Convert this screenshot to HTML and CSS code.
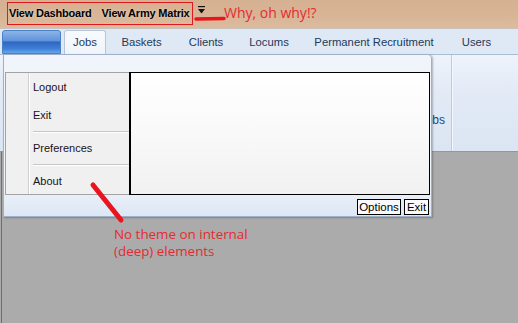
FILE: index.html
```html
<!DOCTYPE html>
<html>
<head>
  <title>Ribbon application menu</title>
  <link rel="stylesheet" href="styles.css">
</head>
<body>

  <div class="titlebar">
    <div class="quick-links">
      <span class="quick-link">View Dashboard</span>
      <span class="quick-link">View Army Matrix</span>
    </div>
    <svg class="qat-arrow" width="8" height="8" viewBox="0 0 8 8">
      <rect x="0" y="0" width="7" height="1.2" fill="#111"/>
      <polygon points="0,3 7,3 3.5,7.5" fill="#111"/>
    </svg>
    <span class="note note-why">Why, oh why!?</span>
  </div>

  <div class="tab-row">
    <div class="app-button"></div>
    <div class="tab active">Jobs</div>
    <div class="tab tab-baskets">Baskets</div>
    <div class="tab tab-clients">Clients</div>
    <div class="tab tab-locums">Locums</div>
    <div class="tab tab-perm">Permanent Recruitment</div>
    <div class="tab tab-users">Users</div>
  </div>

  <div class="ribbon">
    <div class="ribbon-group">
      <span class="group-label">Jobs</span>
    </div>
    <div class="ribbon-group empty"></div>
  </div>

  <div class="workspace"></div>

  <!-- application menu dropped over the ribbon -->
  <div class="app-menu">
    <div class="menu-top"></div>
    <div class="menu-body">
      <div class="menu-list">
        <div class="menu-gutter"></div>
        <div class="menu-items">
          <div class="menu-item">Logout</div>
          <div class="menu-item">Exit</div>
          <div class="menu-sep"></div>
          <div class="menu-item">Preferences</div>
          <div class="menu-sep small"></div>
          <div class="menu-item">About</div>
        </div>
      </div>
      <div class="recent-panel"></div>
    </div>
    <div class="menu-footer">
      <button class="plain-button options">Options</button>
      <button class="plain-button exit">Exit</button>
    </div>
  </div>

  <!-- annotations -->
  <svg class="marks" width="518" height="323" viewBox="0 0 518 323">
    <line x1="196" y1="19" x2="224" y2="18.5" stroke="#e8141e" stroke-width="3.5" stroke-linecap="round"/>
    <line x1="93" y1="185" x2="121" y2="220" stroke="#e8141e" stroke-width="5" stroke-linecap="round"/>
  </svg>
  <div class="note note-theme">No theme on internal<br>(deep) elements</div>

</body>
</html>
```

FILE: styles.css
```css
body {
  margin: 0;
  width: 518px;
  height: 323px;
  overflow: hidden;
  position: relative;
  background-color: #ababab;
  font-family: "Liberation Sans", Arial, sans-serif;
}

/* Title bar with quick access links */
.titlebar {
  height: 29px;
  display: flex;
  align-items: center;
  background: linear-gradient(180deg, #d5b091 0%, #d9b597 60%, #dcbb9e 100%);
  border-bottom: 1px solid #c9c2bb;
  box-sizing: border-box;
}

.quick-links {
  margin-left: 7px;
  width: 186px;
  height: 23px;
  box-sizing: border-box;
  border: 1px solid #e0191f;
  display: flex;
  align-items: flex-start;
  padding: 4px 0 0 1px;
  gap: 10px;
  margin-top: -1px;
}

.quick-link {
  font-size: 11px;
  font-weight: bold;
  color: #000;
  letter-spacing: -0.2px;
  text-shadow: 0 0 3px rgba(255, 255, 255, 0.5);
}

.qat-arrow {
  margin-left: 5px;
  margin-top: -9px;
}

.note {
  font-family: "Open Sans", "Noto Sans", sans-serif;
  color: #e52a30;
  font-size: 13.4px;
}

.note-why {
  margin-left: 18px;
  margin-top: -3px;
  font-size: 14px;
}

/* Ribbon tabs */
.tab-row {
  height: 25px;
  display: flex;
  align-items: flex-end;
  background-color: #dfe9f5;
  box-sizing: border-box;
}

.app-button {
  margin-left: 2px;
  width: 59px;
  height: 24px;
  box-sizing: border-box;
  border: 1px solid #4b7fc6;
  border-radius: 3px 3px 0 0;
  background: linear-gradient(180deg, #8db4e8 0%, #5e93dc 45%, #2f66c0 50%, #3f7fd6 80%, #63a6ee 100%);
}

.tab {
  height: 24px;
  box-sizing: border-box;
  display: flex;
  justify-content: center;
  align-items: center;
  font-size: 11.3px;
  color: #1e395b;
  padding-bottom: 1px;
}

.tab.active {
  margin-left: 3px;
  width: 42px;
  border: 1px solid #b7c6da;
  border-bottom: none;
  border-radius: 3px 3px 0 0;
  background: linear-gradient(180deg, #f8fafd, #f0f5fb);
}

.tab-baskets { width: 71px; }
.tab-clients { width: 58px; }
.tab-locums  { width: 68px; }
.tab-perm    { width: 142px; }
.tab-users   { width: 63px; }

/* Ribbon body */
.ribbon {
  height: 98px;
  display: flex;
  box-sizing: border-box;
  border-top: 1px solid #aabcd6;
  border-bottom: 1px solid #8e98a6;
  background: linear-gradient(180deg, #eef3fb 0%, #e2eaf6 40%, #dbe5f3 100%);
}

.ribbon-group {
  width: 452px;
  display: flex;
  justify-content: flex-end;
  align-items: flex-end;
  padding: 0 6px 24px 0;
  box-sizing: border-box;
  border-right: 1px solid #bccbdf;
}

.ribbon-group.empty {
  flex: 1;
  border-right: none;
  border-left: 1px solid #f4f7fc;
}

.group-label {
  font-size: 12px;
  color: #25467a;
}

/* Gray MDI area */
.workspace {
  height: 171px;
  margin-left: 1px;
  border-left: 1px solid #6f6f6f;
}

/* Application menu popup */
.app-menu {
  position: absolute;
  left: 3px;
  top: 54px;
  width: 429px;
  height: 163px;
  box-sizing: border-box;
  border: 1px solid #9fb0c8;
  border-top-right-radius: 4px;
  background: linear-gradient(180deg, #f1f5fb 0%, #eef3fa 80%, #dde7f5 100%);
  box-shadow: 1px 1px 2px rgba(0, 0, 0, 0.25);
  display: flex;
  flex-direction: column;
}

.menu-top {
  height: 17px;
}

.menu-body {
  display: flex;
  padding-left: 1px;
}

.menu-list {
  width: 124px;
  height: 123px;
  box-sizing: border-box;
  display: flex;
  background-color: #f0f0f0;
  border: 1px solid #a3a3a3;
  border-right: none;
}

.menu-gutter {
  width: 22px;
  border-right: 1px solid #cfcfcf;
  box-shadow: 1px 0 0 #ffffff;
}

.menu-items {
  flex: 1;
  padding-left: 4px;
}

.menu-item {
  height: 28px;
  display: flex;
  align-items: center;
  font-size: 11px;
  color: #1c1020;
}

.menu-sep {
  height: 5px;
  display: flex;
  align-items: center;
}

.menu-sep::after {
  content: "";
  flex: 1;
  height: 1px;
  background-color: #c6c6c6;
  box-shadow: 0 1px 0 #ffffff;
}

.menu-sep.small {
  height: 5px;
}

.recent-panel {
  width: 301px;
  height: 123px;
  box-sizing: border-box;
  border: 1px solid #000;
  border-left-width: 2px;
  background: linear-gradient(180deg, #ffffff 0%, #f9f9f9 50%, #f1f1f1 100%);
}

.menu-footer {
  flex: 1;
  display: flex;
  justify-content: flex-end;
  align-items: flex-start;
  gap: 3px;
  padding: 4px 2px 0 0;
}

.plain-button {
  height: 16px;
  box-sizing: border-box;
  border: 1px solid #000;
  background-color: #fafafa;
  padding: 0;
  font-family: "Liberation Sans", Arial, sans-serif;
  font-size: 11.5px;
  color: #000;
  line-height: 13px;
}

.plain-button.options { width: 44px; }
.plain-button.exit    { width: 25px; }

/* Annotation overlay */
.marks {
  position: absolute;
  left: 0;
  top: 0;
  pointer-events: none;
}

.note-theme {
  position: absolute;
  left: 114px;
  top: 226px;
  line-height: 17px;
}
```
